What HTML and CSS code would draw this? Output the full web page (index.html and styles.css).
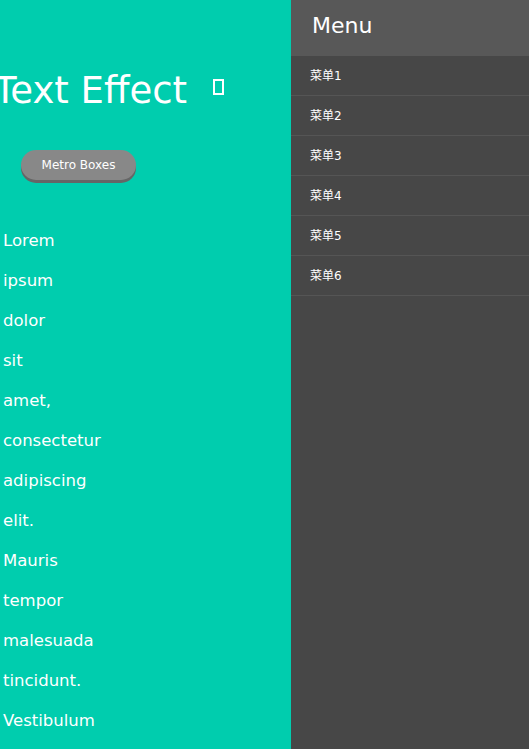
FILE: index.html
```html
<!DOCTYPE html>
<html>
<head>
<meta charset="utf-8">
<link rel="stylesheet" href="styles.css">
</head>
<body>
<div class="page">
  <main class="content">
    <h1 class="title">Text Effect <span class="tofu"></span></h1>
    <button class="btn">Metro Boxes</button>
    <ul class="words">
      <li>Lorem</li>
      <li>ipsum</li>
      <li>dolor</li>
      <li>sit</li>
      <li>amet,</li>
      <li>consectetur</li>
      <li>adipiscing</li>
      <li>elit.</li>
      <li>Mauris</li>
      <li>tempor</li>
      <li>malesuada</li>
      <li>tincidunt.</li>
      <li>Vestibulum</li>
    </ul>
  </main>
  <nav class="menu">
    <div class="menu-head">Menu</div>
    <ul class="menu-list">
      <li>菜单1</li>
      <li>菜单2</li>
      <li>菜单3</li>
      <li>菜单4</li>
      <li>菜单5</li>
      <li>菜单6</li>
    </ul>
  </nav>
</div>
</body>
</html>
```
FILE: styles.css
```css
html, body {
  margin: 0;
  padding: 0;
  height: 100%;
  overflow: hidden;
}
body {
  font-family: "DejaVu Sans", "Noto Sans CJK SC", sans-serif;
  color: #fff;
}
.page {
  display: flex;
  height: 749px;
}
.content {
  width: 291px;
  flex: none;
  background: #00cdae;
  overflow: hidden;
}
.title {
  margin: 65px 0 0 -6px;
  font-size: 37px;
  font-weight: normal;
  line-height: 52px;
  white-space: nowrap;
  display: flex;
  align-items: center;
}
.tofu {
  display: inline-block;
  box-sizing: border-box;
  width: 11px;
  height: 16px;
  border: 2px solid #fff;
  margin-left: 26px;
  margin-top: -8px;
}
.btn {
  margin: 33px 0 0 21px;
  width: 115px;
  height: 30px;
  border: none;
  border-radius: 15px;
  background: #888888;
  box-shadow: 0 3px 0 #666;
  color: #fff;
  font-family: "DejaVu Sans", sans-serif;
  font-size: 12px;
  padding: 0;
}
.words {
  list-style: none;
  margin: 41px 0 0 3px;
  padding: 0;
}
.words li {
  font-size: 16.5px;
  line-height: 40px;
}
.menu {
  flex: 1;
  background: #474747;
}
.menu-head {
  height: 56px;
  background: #585858;
  font-size: 22px;
  line-height: 51px;
  padding-left: 21px;
}
.menu-list {
  list-style: none;
  margin: 0;
  padding: 0;
}
.menu-list li {
  height: 39px;
  line-height: 40px;
  border-bottom: 1px solid #555;
  padding-left: 19px;
  font-size: 12px;
}
```
